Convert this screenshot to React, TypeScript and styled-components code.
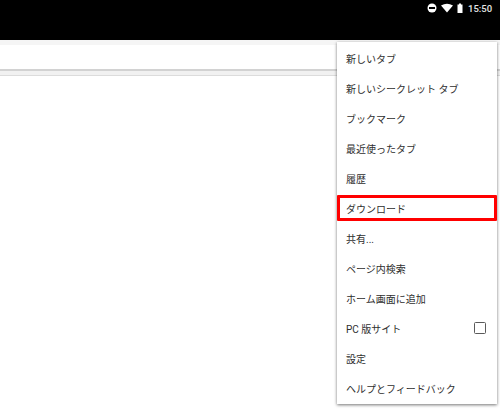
import React from "react";
import styled, { createGlobalStyle } from "styled-components";

const GlobalStyle = createGlobalStyle`
  html, body {
    margin: 0;
    padding: 0;
    background: #fff;
  }
  body {
    font-family: "Roboto", "Noto Sans CJK JP", sans-serif;
  }
`;

const Screen = styled.div`
  position: relative;
  width: 500px;
  height: 417px;
  overflow: hidden;
  background: #fff;
`;

const StatusBar = styled.div`
  height: 40px;
  background: #000;
  display: flex;
  justify-content: flex-end;
  align-items: flex-start;
  padding: 3px 10px 0 0;
  box-sizing: border-box;
  color: #fff;
`;

const StatusIcon = styled.svg<{ $gap: number }>`
  display: block;
  margin-right: ${(p) => p.$gap}px;
`;

const Clock = styled.span`
  width: 22px;
  font-size: 9.5px;
  font-weight: 500;
  line-height: 11px;
  color: #e4e4e4;
  white-space: nowrap;
`;

const Toolbar = styled.div`
  height: 29px;
  box-sizing: border-box;
  background: #fff;
  border-top: 5px solid #f5f5f5;
`;

const ToolbarEdge = styled.div`
  height: 7px;
  background: #f1f1f1;
  border-top: 2px solid #d2d2d2;
  border-bottom: 1px solid #dcdcdc;
  box-sizing: border-box;
`;

const Menu = styled.ul`
  position: absolute;
  top: 42px;
  left: 337px;
  width: 160px;
  height: 362px;
  margin: 0;
  padding: 1px 0 0;
  box-sizing: border-box;
  list-style: none;
  background: #fff;
  box-shadow: 0 1px 3px rgba(0, 0, 0, 0.55);
  display: flex;
  flex-direction: column;
`;

const Item = styled.li<{ $outlined?: boolean }>`
  position: relative;
  height: 30px;
  flex: none;
  display: flex;
  align-items: center;
  justify-content: space-between;
  box-sizing: border-box;
  padding: 0 11px 0 9px;
  font-size: 10px;
  color: #2e2e2e;
  white-space: nowrap;

  ${(p) =>
    p.$outlined &&
    `&::after {
      content: "";
      position: absolute;
      top: 2px;
      left: 0;
      right: 0;
      bottom: 2px;
      border: 3px solid #f00;
      border-radius: 1px;
    }`}
`;

const Checkbox = styled.span`
  width: 12px;
  height: 12px;
  border: 1.5px solid #5a5a5a;
  border-radius: 1.5px;
  box-sizing: border-box;
  flex: none;
`;

const items = [
  "新しいタブ",
  "新しいシークレット タブ",
  "ブックマーク",
  "最近使ったタブ",
  "履歴",
  "ダウンロード",
  "共有...",
  "ページ内検索",
  "ホーム画面に追加",
  "PC 版サイト",
  "設定",
  "ヘルプとフィードバック",
];

const App = () => (
  <Screen>
    <GlobalStyle />
    <StatusBar>
      <StatusIcon $gap={4} width="10" height="10" viewBox="0 0 10 10">
        <circle cx="5" cy="5" r="4.5" fill="#fff" />
        <rect x="2" y="4" width="6" height="2" fill="#000" />
      </StatusIcon>
      <StatusIcon $gap={4} width="12" height="10" viewBox="0 0 12 10">
        <path d="M0 2.5 Q6 -1 12 2.5 L6 9.5 Z" fill="#fff" />
      </StatusIcon>
      <StatusIcon $gap={5} width="6" height="10" viewBox="0 0 6 10">
        <path d="M2 0.5 H4 V1.5 H5.5 V10 H0.5 V1.5 H2 Z" fill="#fff" />
      </StatusIcon>
      <Clock>15:50</Clock>
    </StatusBar>
    <Toolbar />
    <ToolbarEdge />
    <Menu>
      {items.map((text) => (
        <Item key={text} $outlined={text === "ダウンロード"}>
          {text}
          {text === "PC 版サイト" && <Checkbox />}
        </Item>
      ))}
    </Menu>
  </Screen>
);

export default App;
